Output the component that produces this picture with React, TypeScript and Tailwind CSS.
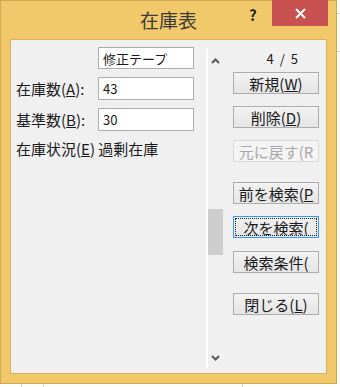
const font = { fontFamily: '"Noto Sans CJK JP", "Noto Sans", sans-serif' };

function Btn({
  children,
  top,
  disabled,
  focused,
}: {
  children: React.ReactNode;
  top: number;
  disabled?: boolean;
  focused?: boolean;
}) {
  const base =
    "w-[86px] h-[22px] flex items-center justify-center overflow-hidden whitespace-nowrap text-[15px] leading-none border";
  const look = disabled
    ? "bg-[#f4f4f4] border-[#d9d9d9] text-[#a8a8a8]"
    : focused
    ? "bg-gradient-to-b from-[#f2f2f2] to-[#e5e5e5] border-[#3399ff] text-[#1a1a1a]"
    : "bg-gradient-to-b from-[#f2f2f2] to-[#e5e5e5] border-[#acacac] text-[#1a1a1a]";
  return (
    <div className={`${base} ${look}`} style={{ marginTop: top }}>
      {focused ? (
        <div className="flex h-[18px] w-[82px] items-center justify-center overflow-hidden border border-dotted border-[#202020]">
          {children}
        </div>
      ) : (
        children
      )}
    </div>
  );
}

function Chevron({ up }: { up?: boolean }) {
  return (
    <svg width="9" height="6" viewBox="0 0 9 6">
      <path
        d={up ? "M1 5 L4.5 1.5 L8 5" : "M1 1 L4.5 4.5 L8 1"}
        fill="none"
        stroke="#5a5a5a"
        strokeWidth="2"
      />
    </svg>
  );
}

export default function App() {
  return (
    <div className="relative h-[387px] w-[340px] overflow-hidden bg-white" style={font}>
      {/* grid lines of the sheet behind */}
      <div className="absolute left-[337px] top-[13px] h-px w-[3px] bg-[#d4d4d4]" />
      <div className="absolute left-[337px] top-[51px] h-px w-[3px] bg-[#d4d4d4]" />
      <div className="absolute left-[21px] top-[384px] h-[3px] w-px bg-[#d4d4d4]" />
      <div className="absolute left-[43px] top-[384px] h-[3px] w-px bg-[#d4d4d4]" />
      <div className="absolute left-[242px] top-[384px] h-[3px] w-px bg-[#d4d4d4]" />

      <div className="flex h-[384px] w-[337px] flex-col border border-[#d0a94e] bg-[#f1c96a]">
        {/* title bar */}
        <div className="relative flex h-[38px] shrink-0 items-start">
          <div className="absolute left-0 right-0 top-[7px] text-center text-[19px] leading-[24px] text-[#3a3a3a]">
            在庫表
          </div>
          <div className="absolute left-[248px] top-[5px] text-[15px] font-bold leading-[18px] text-[#1a1a1a]">?</div>
          <div className="absolute left-[271px] top-[-1px] flex h-[26px] w-[56px] items-center justify-center bg-[#c75050]">
            <svg width="11" height="11" viewBox="0 0 11 11">
              <path d="M1 1 L10 10 M10 1 L1 10" stroke="#fff" strokeWidth="2" />
            </svg>
          </div>
        </div>

        {/* client area */}
        <div className="ml-[9px] flex h-[335px] w-[317px] border border-[#d8b25c] bg-[#f0f0f0] text-[#1a1a1a]">
          {/* fields */}
          <div className="flex w-[195px] shrink-0 flex-col">
            <div className="ml-[87px] mt-[7px] flex h-[22px] w-[96px] items-center border border-[#adadad] bg-white pl-[4px] text-[13px] leading-none">
              修正テープ
            </div>
            <div className="mt-[8px] flex items-center">
              <div className="w-[87px] pl-[5px] text-[15px] leading-none">
                在庫数(<span className="underline">A</span>):
              </div>
              <div className="flex h-[23px] w-[96px] items-center border border-[#adadad] bg-white pl-[4px] text-[13px] leading-none">
                43
              </div>
            </div>
            <div className="mt-[8px] flex items-center">
              <div className="w-[87px] pl-[5px] text-[15px] leading-none">
                基準数(<span className="underline">B</span>):
              </div>
              <div className="flex h-[23px] w-[96px] items-center border border-[#adadad] bg-white pl-[4px] text-[13px] leading-none">
                30
              </div>
            </div>
            <div className="mt-[9px] whitespace-nowrap pl-[5px] text-[15px] leading-[18px]">
              在庫状況(<span className="underline">E</span>) 過剰在庫
            </div>
          </div>

          {/* scrollbar */}
          <div className="mt-[9px] mb-[5px] w-[2px] shrink-0 bg-white" />
          <div className="flex w-[15px] shrink-0 flex-col items-center pt-[18px]">
            <Chevron up />
            <div className="mt-[145px] h-[46px] w-[15px] shrink-0 bg-[#cdcdcd]" />
            <div className="mt-[100px] flex">
              <Chevron />
            </div>
          </div>

          {/* buttons */}
          <div className="flex flex-col pl-[10px]">
            <div className="mt-[10px] flex h-[16px] w-[65px] items-center justify-end gap-[6px] text-[13px] leading-none">
              <span>4</span>
              <span>/</span>
              <span>5</span>
            </div>
            <Btn top={6}>
              新規(<span className="underline">W</span>)
            </Btn>
            <Btn top={12}>
              削除(<span className="underline">D</span>)
            </Btn>
            <Btn top={12} disabled>
              元に戻す(R
            </Btn>
            <Btn top={20}>
              前を検索(<span className="underline">P</span>
            </Btn>
            <Btn top={12} focused>
              次を検索(
            </Btn>
            <Btn top={13}>検索条件(</Btn>
            <Btn top={20}>
              閉じる(<span className="underline">L</span>)
            </Btn>
          </div>
        </div>
      </div>
    </div>
  );
}
